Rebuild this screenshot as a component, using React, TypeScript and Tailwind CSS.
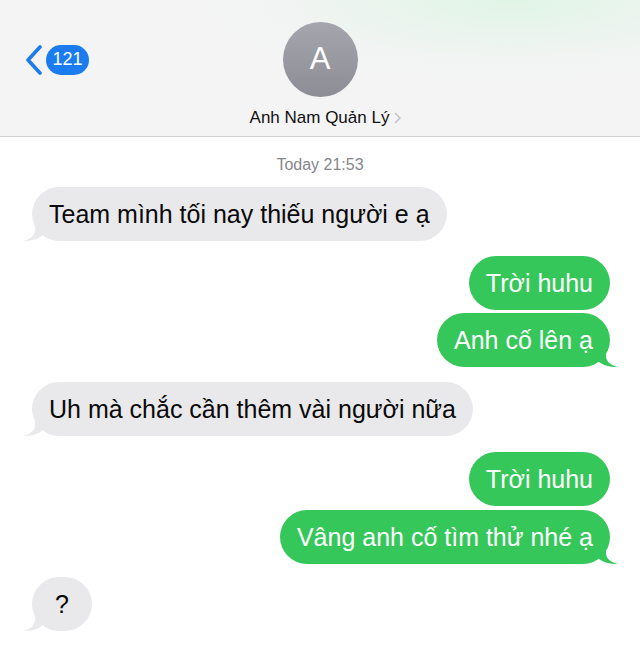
import React from "react";

type Msg = { text: string; me: boolean; tail: boolean; gap: string };

const messages: Msg[] = [
  { text: "Team mình tối nay thiếu người e ạ", me: false, tail: true, gap: "mt-[10px]" },
  { text: "Trời huhu", me: true, tail: false, gap: "mt-[15px]" },
  { text: "Anh cố lên ạ", me: true, tail: true, gap: "mt-[3px]" },
  { text: "Uh mà chắc cần thêm vài người nữa", me: false, tail: true, gap: "mt-[15px]" },
  { text: "Trời huhu", me: true, tail: false, gap: "mt-[16px]" },
  { text: "Vâng anh cố tìm thử nhé ạ", me: true, tail: true, gap: "mt-[4px]" },
  { text: "?", me: false, tail: true, gap: "mt-[13px]" },
];

function Tail({ me }: { me: boolean }) {
  const fill = me ? "#35c759" : "#e9e9eb";
  if (me) {
    return (
      <svg
        width="20"
        height="24"
        viewBox="0 0 20 24"
        className="absolute right-[-8px] bottom-0"
      >
        <path d="M0 0 L8 0 L8 13 C8 18 12 22 20 24 C11 24 5 22 1 19 Z" fill={fill} />
      </svg>
    );
  }
  return (
    <svg
      width="20"
      height="24"
      viewBox="0 0 20 24"
      className="absolute left-[-9px] bottom-0"
    >
      <path d="M20 0 L12 0 L12 13 C12 18 8 22 0 24 C9 24 15 22 19 19 Z" fill={fill} />
    </svg>
  );
}

function Bubble({ m }: { m: Msg }) {
  return (
    <div className={`flex ${m.me ? "justify-end pr-[30px]" : "justify-start pl-[32px]"} ${m.gap}`}>
      <div
        className={`relative rounded-[27px] px-[17px] min-w-[60px] h-[54px] flex items-center justify-center text-[25px] leading-none ${
          m.me ? "bg-[#35c759] text-white" : "bg-[#e9e9eb] text-[#0a0a0a]"
        }`}
      >
        {m.tail && <Tail me={m.me} />}
        <span className="relative">{m.text}</span>
      </div>
    </div>
  );
}

export default function App() {
  return (
    <div className="w-[640px] h-[666px] overflow-hidden bg-white font-['Liberation_Sans',Arial,sans-serif]">
      <header className="h-[137px] border-b border-[#d2d2d4] bg-[radial-gradient(ellipse_50%_60%_at_80%_0%,#e0f5e6_0%,#f2f4f3_75%,#f4f4f5_100%)] pt-[22px]">
        <div className="grid grid-cols-[1fr_auto_1fr] items-center">
          <div className="flex items-center pl-[25px]">
            <svg width="18" height="30" viewBox="0 0 18 30">
              <path
                d="M15 2 L3 15 L15 28"
                fill="none"
                stroke="#1b7cf0"
                strokeWidth="3.6"
                strokeLinecap="round"
                strokeLinejoin="round"
              />
            </svg>
            <div className="ml-[3px] h-[30px] w-[43px] rounded-full bg-[#1b7cf0] text-white text-[18px] flex items-center justify-center">
              121
            </div>
          </div>
          <div className="w-[75px] h-[75px] rounded-full bg-[linear-gradient(#a4a5ad,#8c8d95)] flex items-center justify-center text-white text-[31px]">
            A
          </div>
          <div />
        </div>
        <div className="mt-[8px] flex items-center justify-center text-[17px] text-[#111] pl-[12px]">
          Anh Nam Quản Lý
          <svg width="10" height="14" viewBox="0 0 10 14" className="ml-[3px]">
            <path d="M3 2 L8 7 L3 12" fill="none" stroke="#c0c0c4" strokeWidth="1.4" />
          </svg>
        </div>
      </header>

      <div className="pt-[16px] text-center text-[16px] font-medium text-[#86868b]">
        Today 21:53
      </div>

      <div className="flex flex-col">
        {messages.map((m, i) => (
          <Bubble key={i} m={m} />
        ))}
      </div>
    </div>
  );
}
